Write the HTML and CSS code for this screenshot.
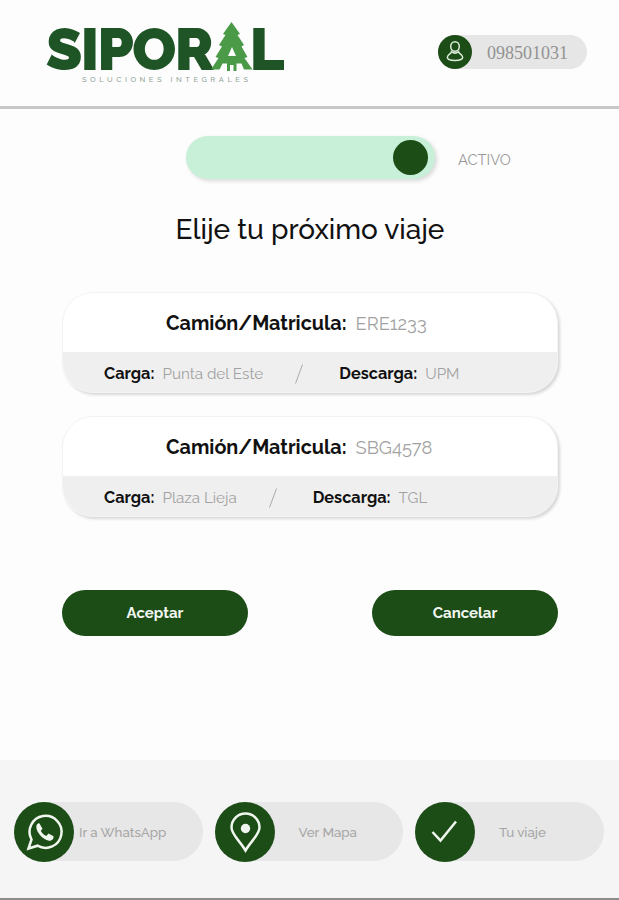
FILE: index.html
```html
<!DOCTYPE html>
<html lang="es">
<head>
    <meta charset="UTF-8">
    <meta name="viewport" content="width=device-width, initial-scale=1.0">
    <title>Siporal - Elije tu viaje</title>
    <link rel="stylesheet" href="styles.css">
</head>
<body>
    <header class="header">
        <svg class="logo" viewBox="0 0 240 64" role="img" aria-label="Siporal">
            <text class="logo-name" x="1" y="46.500" textLength="166" lengthAdjust="spacingAndGlyphs">SIPOR</text>
            <text class="logo-name" x="204.500" y="46.500" textLength="33" lengthAdjust="spacingAndGlyphs">L</text>
            <path class="logo-tree" fill-rule="evenodd" d="M185.500 0 L194 12 L191.500 13 L198 23 L195.500 24.500 L201.500 35 L198.500 36 L206.500 47.500 L198 47.500 L195.500 41.500 L190.500 41.500 L190.500 49 L187.500 49 L187.500 43 L184 43 L184 49 L181 49 L181 41.500 L176.500 41.500 L173.500 47.500 L165 47.500 L172.500 36 L169.500 35 L176 24.500 L173 23 L179.500 13 L177 12 Z M186 25 L182 34 L190 34 Z"/>
            <text class="logo-sub" x="36" y="59.500" textLength="166">SOLUCIONES INTEGRALES</text>
        </svg>
        <div class="user-pill">
            <span class="user-icon">
                <svg viewBox="0 0 34 34">
                    <ellipse cx="17" cy="11.500" rx="4.300" ry="4.800"/>
                    <path d="M13.500 16.800 C15.500 18.300 18.500 18.300 20.500 16.800 C20.500 18.500 24.700 19.500 24.700 22.300 C24.700 24.500 21 25.500 17 25.500 C13 25.500 9.300 24.500 9.300 22.300 C9.300 19.500 13.500 18.500 13.500 16.800 Z"/>
                </svg>
            </span>
            <span class="user-number">098501031</span>
        </div>
    </header>

    <main class="main">
        <div class="status">
            <div class="switch"><span class="switch-knob"></span></div>
            <span class="status-label">ACTIVO</span>
        </div>

        <h1 class="title">Elije tu próximo viaje</h1>

        <section class="card">
            <div class="card-top">
                <b>Camión/Matricula:</b>
                <span class="value">ERE1233</span>
            </div>
            <div class="card-bottom">
                <b>Carga:</b>
                <span class="value">Punta del Este</span>
                <svg class="slash" viewBox="0 0 8 20"><path d="M0.500 19.500 L7.500 0.500"/></svg>
                <b class="descarga">Descarga:</b>
                <span class="value">UPM</span>
            </div>
        </section>

        <section class="card">
            <div class="card-top">
                <b>Camión/Matricula:</b>
                <span class="value">SBG4578</span>
            </div>
            <div class="card-bottom">
                <b>Carga:</b>
                <span class="value">Plaza Lieja</span>
                <svg class="slash" viewBox="0 0 8 20"><path d="M0.500 19.500 L7.500 0.500"/></svg>
                <b class="descarga">Descarga:</b>
                <span class="value">TGL</span>
            </div>
        </section>

        <div class="actions">
            <button class="btn">Aceptar</button>
            <button class="btn">Cancelar</button>
        </div>
    </main>

    <footer class="footer">
        <a class="nav-pill">
            <span class="nav-icon">
                <svg viewBox="0 0 60 60">
                    <path class="line" d="M14.500 46.500 L17.500 37.500 A16 16 0 1 1 23.500 43.700 Z"/>
                    <path class="solid" d="M25.500 21.500 C24.500 20.800 22.300 22 22.300 25 C22.200 29.500 28.500 37.800 35 38.800 C38.300 39 40 36.500 39.500 34.300 L34.500 31.500 L32.300 34 C29.500 33 27.800 31 26.800 28.800 L28.500 26.800 Z"/>
                </svg>
            </span>
            <span class="nav-text whatsapp">Ir a WhatsApp</span>
        </a>
        <a class="nav-pill">
            <span class="nav-icon">
                <svg viewBox="0 0 60 60">
                    <path class="line" d="M30.500 48.500 C25 39 16.500 32.500 16.500 25.500 A14 14 0 0 1 44.500 25.500 C44.500 32.500 36 39 30.500 48.500 Z"/>
                    <circle class="solid" cx="30.500" cy="26.500" r="4.700"/>
                </svg>
            </span>
            <span class="nav-text mapa">Ver Mapa</span>
        </a>
        <a class="nav-pill">
            <span class="nav-icon">
                <svg viewBox="0 0 60 60">
                    <path class="line" d="M17.500 30 L25.500 38.500 L41 19.500"/>
                </svg>
            </span>
            <span class="nav-text viaje">Tu viaje</span>
        </a>
    </footer>
</body>
</html>
```

FILE: styles.css
```css
* { box-sizing: border-box; }

body {
    margin: 0;
    height: 900px;
    display: flex;
    flex-direction: column;
    overflow: hidden;
    background: #fdfdfd;
    font-family: Raleway, Lato, sans-serif;
    color: #111;
}

/* Cabecera */
.header {
    height: 109px;
    padding: 22px 32px 0 46px;
    display: flex;
    justify-content: space-between;
    align-items: flex-start;
    border-bottom: 3px solid #c8c8c8;
}

.logo {
    width: 240px;
    height: 64px;
    overflow: visible;
}

.logo-name {
    font: 800 55px Raleway, Inter, sans-serif;
    fill: #1f5526;
    stroke: #1f5526;
    stroke-width: 2px;
}

.logo-tree { fill: #4a9a48; }

.logo-sub {
    font: 500 7.5px Raleway, Inter, sans-serif;
    fill: #93a596;
}

.user-pill {
    display: flex;
    align-items: center;
    width: 149px;
    height: 34px;
    margin-top: 13px;
    border-radius: 17px;
    background: #e6e6e6;
}

.user-icon {
    width: 34px;
    height: 34px;
    border-radius: 50%;
    background: #1d4d17;
}

.user-icon svg {
    display: block;
    fill: none;
    stroke: #dcebd9;
    stroke-width: 1.5;
}

.user-number {
    margin: 2px 0 0 15px;
    font: 18px "Liberation Serif", serif;
    color: #929292;
}

/* Contenido */
.main {
    flex: 1;
    padding: 27px 61px 0 62px;
}

.status {
    display: flex;
    align-items: center;
    padding-left: 124px;
}

.switch {
    display: flex;
    justify-content: flex-end;
    width: 249px;
    height: 43px;
    padding: 4px 7px 0 0;
    border-radius: 22px;
    background: #c8efd7;
    box-shadow: 2px 2px 4px rgba(0, 0, 0, 0.15);
}

.switch-knob {
    width: 35px;
    height: 35px;
    border-radius: 50%;
    background: #1d4d17;
}

.status-label {
    margin: 3px 0 0 23px;
    font-size: 14.7px;
    color: #999;
}

.title {
    height: 40px;
    margin: 31px 0 42px;
    font-size: 28px;
    font-weight: 500;
    line-height: 40px;
    text-align: center;
}

.card {
    height: 101px;
    margin-bottom: 23px;
    border: 1px solid #f3f3f3;
    border-radius: 31px;
    overflow: hidden;
    background: #fff;
    box-shadow: 2px 2px 3px rgba(0, 0, 0, 0.15);
}

.card-top {
    display: flex;
    align-items: baseline;
    gap: 9px;
    height: 59px;
    padding: 18px 0 0 103px;
    font-size: 19.8px;
}

.card-top .value { font-size: 18.3px; }

.card-bottom {
    display: flex;
    align-items: baseline;
    height: 41px;
    padding: 12px 0 0 41px;
    background: #efefef;
    font-size: 16.3px;
}

.value { color: #a2a2a2; }

.card-bottom .value {
    margin-left: 8px;
    font-size: 15.2px;
}

.slash {
    align-self: flex-start;
    width: 8px;
    height: 20px;
    margin-left: 32px;
    fill: none;
    stroke: #aaa;
}

.descarga { margin-left: 36px; }

.actions {
    display: flex;
    justify-content: space-between;
    margin-top: 73px;
}

.btn {
    width: 186px;
    height: 46px;
    border: none;
    border-radius: 23px;
    background: #1d4d17;
    color: #f3f8f2;
    font: 700 15px Raleway, Lato, sans-serif;
}

/* Barra inferior */
.footer {
    display: flex;
    gap: 12px;
    height: 140px;
    padding: 42px 0 0 14px;
    background: #f5f5f5;
    border-bottom: 2px solid #8c8c8c;
}

.nav-pill {
    display: flex;
    align-items: center;
    width: 188.5px;
    height: 59px;
    border-radius: 30px;
    background: #e7e7e7;
}

.nav-icon {
    flex: none;
    width: 60px;
    height: 60px;
    border-radius: 50%;
    background: #1d4d17;
}

.nav-icon svg { display: block; }

.line {
    fill: none;
    stroke: #f0f7ef;
    stroke-width: 2.5;
}

.solid { fill: #f0f7ef; }

.nav-text {
    padding-top: 1px;
    font-size: 13.3px;
    font-weight: 500;
    white-space: nowrap;
    color: #a6a6a6;
}

.whatsapp { padding-left: 5px; }

.mapa { padding-left: 24px; }

.viaje { padding-left: 24px; }
```
